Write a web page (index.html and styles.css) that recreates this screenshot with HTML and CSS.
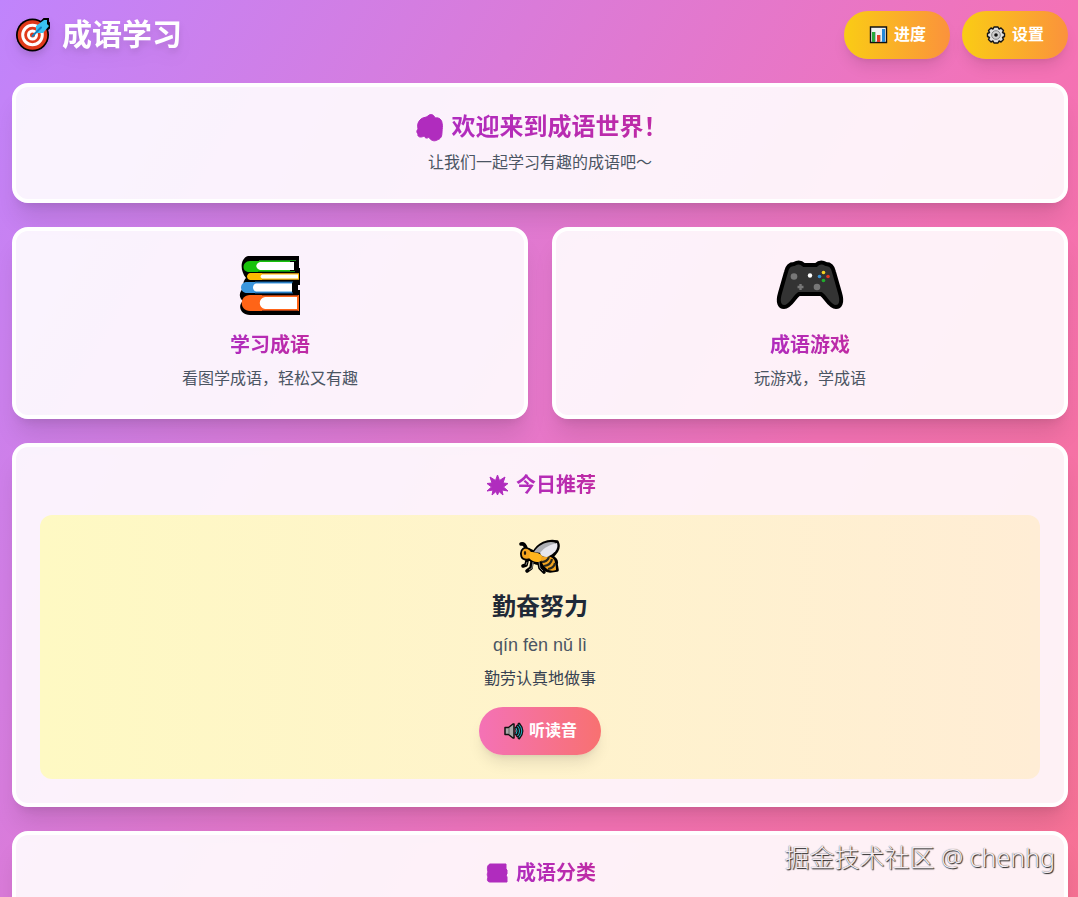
FILE: index.html
```html
<!DOCTYPE html>
<html lang="zh-CN">
<head>
<meta charset="UTF-8">
<meta name="viewport" content="width=device-width, initial-scale=1">
<title>成语学习</title>
<link rel="stylesheet" href="styles.css">
</head>
<body>
<div class="page">
  <header class="header">
    <h1 class="brand">
      <svg class="brand-icon" viewBox="0 0 42 42" aria-hidden="true">
        <circle cx="20.500" cy="21" r="16.500" fill="#000"/>
        <path d="M26 11l6-6h4v3l1 1v5l-6 5z" fill="#000" stroke="#000" stroke-width="2"/>
        <circle cx="20.500" cy="21" r="14.800" fill="#e03a1b"/>
        <circle cx="20.500" cy="21" r="9.800" fill="none" stroke="#fff" stroke-width="3"/>
        <circle cx="20.500" cy="21" r="4" fill="none" stroke="#fff" stroke-width="3"/>
        <path d="M24 12l8-6h3v4l2 2-6 7h-7z" fill="#39c3f2"/>
        <path d="M20.500 22L29 13.500" stroke="#147fc1" stroke-width="2" stroke-linecap="round"/>
      </svg>
      <span>成语学习</span>
    </h1>
    <nav class="actions">
      <button class="btn btn-gold" type="button">
        <svg class="btn-icon" viewBox="0 0 22 22" aria-hidden="true">
          <path d="M2.500 3h16v15.500h-16z" fill="#f2f2f2" stroke="#111" stroke-width="1.400"/>
          <path d="M4 8h3v10H4z" fill="#27a83c"/><path d="M9 11h3v7H9z" fill="#e43a28"/><path d="M14 5h3v13h-3z" fill="#2589d8"/>
          <path d="M7.500 8v9M12.500 11v6" stroke="#bbb"/>
        </svg>
        <span>进度</span>
      </button>
      <button class="btn btn-gold" type="button">
        <svg class="btn-icon" viewBox="0 0 22 22" aria-hidden="true">
          <path d="M8 3h4l1 2 2-1 2.500 2.500-1 2 2 1v3l-2 1 1 2L15 18l-2-1-1 2H8l-1-2-2 1-2.500-2.500 1-2-2-1v-3l2-1-1-2L5 4l2 1z" fill="#dedede" stroke="#151515" stroke-width="1.400" stroke-linejoin="round"/>
          <circle cx="10" cy="11" r="4.300" fill="#d0d0d0" stroke="#888"/><circle cx="10" cy="11" r="1.800" fill="#111"/>
        </svg>
        <span>设置</span>
      </button>
    </nav>
  </header>

  <main class="content">
    <section class="card">
      <h2 class="title title-large">
        <svg class="title-icon" viewBox="0 0 33 32" aria-hidden="true">
          <path d="M7 9c2-3 6-2 8-4 3-3 6-1 7 2 4-1 7 2 7 5 1 3 0 6 0 9 0 4-1 7-5 8-3 2-7 0-8-3-2 2-4 1-5-1-3 2-7 1-6-2-2-2-1-4 0-5-1-4 0-7 2-9z"/>
        </svg>
        <span class="gradient-text">欢迎来到成语世界！</span>
      </h2>
      <p class="text">让我们一起学习有趣的成语吧～</p>
    </section>

    <div class="features">
      <section class="card">
        <svg class="feature-icon" viewBox="0 0 80 60" aria-hidden="true">
          <path d="M18 1h51v12h1v17h-2v5h2v25H20C11 60 7 51 13 46 8 42 9 36 15 32c-3-3-1-7 1-9C9 14 11 3 18 1z" fill="#000"/>
          <path d="M20 6h40v11H19c-8 0-7-11 1-11z" fill="#18c20b"/>
          <path d="M30 7h34v8H30c-5-2-5-6 0-8z" fill="#fff"/>
          <path d="M29 5.500h37M28 16.500h37" stroke="#118413"/>
          <path d="M20 18h49v7H20c-4-1-4-6 0-7z" fill="#ffb900"/>
          <path d="M32 19.500h36v4H32c-2-1-2-3 0-4z" fill="#fff"/><path d="M32 18.500h37M32 24.500h37" stroke="#c58a13"/>
          <path d="M17 27h45v11H17c-8 0-8-11 0-11z" fill="#3b96dd"/>
          <path d="M26 28.500h36v8H26c-4-1-4-7 0-8z" fill="#fff"/><path d="M25 27h38M25 38h38" stroke="#1760a3"/>
          <path d="M20 40h49v16H20c-11 0-11-16 0-16z" fill="#ff6417"/>
          <path d="M35 42h32v12H35c-7-1-7-11 0-12z" fill="#fff"/><path d="M32 40.500h36M32 55.500h36" stroke="#a63d16"/>
        </svg>
        <h3 class="title"><span class="gradient-text">学习成语</span></h3>
        <p class="text">看图学成语，轻松又有趣</p>
      </section>
      <section class="card">
        <svg class="feature-icon" viewBox="0 0 80 60" aria-hidden="true">
          <path d="M24 9c5-3 8-1 10 1h12c2-2 5-4 10-1 5 0 7 3 8 8l6 21c3 10 0 14-4 14-7 0-10-10-15-13H29c-5 3-8 13-15 13-4 0-7-4-4-14l6-21c1-5 3-8 8-8z" fill="#333" stroke="#000" stroke-width="4" stroke-linejoin="round"/>
          <circle cx="24" cy="21.500" r="3.300" fill="#777"/><circle cx="47" cy="32" r="3.300" fill="#777"/>
          <path d="M30.500 29v6M27.500 32h6" stroke="#777" stroke-width="2.400"/>
          <circle cx="40" cy="20.500" r="2.200" fill="#fff"/><circle cx="53.500" cy="17.500" r="1.800" fill="#f6d323"/>
          <circle cx="49.500" cy="21.500" r="1.800" fill="#3a91d3"/><circle cx="58" cy="21.500" r="1.800" fill="#e23724"/><circle cx="53.500" cy="25.500" r="1.800" fill="#20ad2c"/>
        </svg>
        <h3 class="title"><span class="gradient-text">成语游戏</span></h3>
        <p class="text">玩游戏，学成语</p>
      </section>
    </div>

    <section class="card">
      <h3 class="title title-spaced">
        <svg class="title-icon title-icon-small" viewBox="0 0 27 28" aria-hidden="true">
          <path d="M13.500 4l2 5.500L21 6l-2 6 5 .5-4.500 3.500 4.500 4-6-1 1 5-4-3.500-1.500 3.500-1.500-3.500-4 3.500 1-5-6 1 4.500-4L3 12.500l5-.5-2-6 5.500 3.500z" stroke-width="1"/>
        </svg>
        <span class="gradient-text">今日推荐</span>
      </h3>
      <article class="daily">
        <svg class="bee" viewBox="0 0 50 40" aria-hidden="true">
          <g fill="#000" stroke="#000" stroke-width="3.600" stroke-linecap="round" stroke-linejoin="round">
            <path d="M11 10Q10 4 6 5M12 22l-1 4-3 1M17 23l-1 6-4 3M24 24l1 5 4 4" fill="none"/>
            <path d="M7 16c-1-5 3-8 7-5 3 1 4 2 5 3C23 5 33 1 42 3c3 6-1 11-6 15 4 1 6 4 5 7l1 6-7 1c-4 0-8-4-9-8-4 1-8-1-11-4-4 1-8-1-8-4z"/>
          </g>
          <path d="M7 16c-1-5 3-8 7-5 3 2 3 6 1 8-4 2-8 0-8-3z" fill="#f5a51f"/>
          <path d="M15 13c5 0 11 1 13 5 0 6-9 7-14 1z" fill="#ffb51c"/>
          <path d="M26 18c7-2 14 0 14 6 1 3 1 5 1 7-3 1-6 1-9-1-4-3-6-7-6-12z" fill="#f3a51f"/>
          <path d="M27 23q5 0 7-5M29 27q7-1 8-7M33 30q6-1 7-6" fill="none" stroke="#29291f" stroke-width="2.200"/>
          <path d="M19 13C24 5 34 1 41 4c-5 4-11 5-15 10z" fill="#aeb0b5"/>
          <path d="M25 14C29 8 37 5 42 4c2 6-3 11-10 14-3 0-6-1-7-4z" fill="#e7e7ee"/>
          <ellipse cx="10" cy="14" rx="1.200" ry="2" fill="#21170b"/>
          <path d="M12 23l-1 3M18 23l-1 6-3 2M24 23l1 6 3 3" fill="none" stroke="#88867f" stroke-width="1"/>
        </svg>
        <h4 class="idiom">勤奋努力</h4>
        <p class="pinyin">qín fèn nǔ lì</p>
        <p class="meaning">勤劳认真地做事</p>
        <button class="btn btn-pink" type="button">
          <svg class="btn-icon" viewBox="0 0 22 22" aria-hidden="true">
            <path d="M2 7.500h3.500L10 4h1v14h-1l-4.500-3.500H2z" fill="#aaa" stroke="#111" stroke-width="1.500" stroke-linejoin="round"/>
            <path d="M6 8v6" stroke="#666"/>
            <path d="M13 8q2 3 0 6M14.500 6q4 5 0 10M16 4q6 7 0 14" fill="none" stroke="#111" stroke-width="2.800" stroke-linecap="round"/>
            <path d="M13 8q2 3 0 6M14.500 6q4 5 0 10M16 4.500q5.500 6.500 0 13" fill="none" stroke="#24b5ca" stroke-width="1"/>
          </svg>
          <span>听读音</span>
        </button>
      </article>
    </section>

    <section class="card categories">
      <h3 class="title title-spaced">
        <svg class="title-icon title-icon-small" viewBox="0 0 27 28" aria-hidden="true">
          <path d="M6 5h16v5l1 1v4l-1 1 1 2v5H6c-3 0-3-3-2-5-1-2-1-3 0-5-1-3-1-7 2-8z" stroke-width="1"/>
        </svg>
        <span class="gradient-text">成语分类</span>
      </h3>
    </section>
  </main>
</div>
<p class="watermark">掘金技术社区 @ chenhg</p>
</body>
</html>
```
FILE: styles.css
```css
* {
  box-sizing: border-box;
}

body,
h1,
h2,
h3,
h4,
p {
  margin: 0;
}

body {
  height: 100vh;
  overflow: hidden;
  font-family: "Liberation Sans", "Noto Sans CJK SC", sans-serif;
  font-size: 16px;
  line-height: 24px;
  color: #1f2937;
}

.page {
  min-height: 200vh;
  padding: 11px 10px 24px 12px;
  background: linear-gradient(to bottom right, #c084fc, #f472b6, #f87171);
}

.header {
  display: flex;
  align-items: center;
  justify-content: space-between;
  margin-bottom: 24px;
}

.brand {
  display: flex;
  align-items: center;
  gap: 8px;
  color: #fff;
  font-size: 30px;
  line-height: 36px;
  filter: drop-shadow(0 10px 8px rgba(0, 0, 0, 0.04)) drop-shadow(0 4px 3px rgba(0, 0, 0, 0.1));
}

.brand-icon {
  width: 42px;
  height: 42px;
}

.actions {
  display: flex;
  gap: 12px;
}

.btn {
  display: inline-flex;
  align-items: center;
  gap: 4px;
  padding: 12px 24px;
  border: 0;
  border-radius: 24px;
  color: #fff;
  font: inherit;
  font-weight: 700;
  cursor: pointer;
  box-shadow: 0 10px 15px -3px rgba(0, 0, 0, 0.1), 0 4px 6px -4px rgba(0, 0, 0, 0.1);
}

.btn-gold {
  background: linear-gradient(to right, #facc15, #fb923c);
}

.btn-pink {
  background: linear-gradient(to right, #f472b6, #f87171);
}

.btn-icon {
  width: 22px;
  height: 22px;
}

.content {
  display: grid;
  gap: 24px;
}

.card {
  padding: 24px;
  border: 4px solid #fff;
  border-radius: 16px;
  background: rgba(255, 255, 255, 0.9);
  text-align: center;
  box-shadow: 0 20px 25px -5px rgba(0, 0, 0, 0.1), 0 8px 10px -6px rgba(0, 0, 0, 0.1);
}

.title {
  display: flex;
  justify-content: center;
  gap: 5px;
  margin-bottom: 8px;
  font-size: 20px;
  line-height: 28px;
}

.title-large {
  gap: 6px;
  font-size: 24px;
  line-height: 32px;
}

.title-spaced {
  margin-bottom: 16px;
}

.title-icon {
  width: 33px;
  height: 32px;
  fill: #b02cbe;
  stroke: #b02cbe;
}

.title-icon-small {
  width: 27px;
  height: 28px;
}

.gradient-text {
  background: linear-gradient(to right, #b02cbe, #bf2ba4);
  background-clip: text;
  color: transparent;
}

.text {
  color: #4b5563;
}

.features {
  display: grid;
  grid-template-columns: 1fr 1fr;
  gap: 24px;
}

.feature-icon {
  display: block;
  width: 80px;
  height: 60px;
  margin: 0 auto 16px;
}

.daily {
  padding: 24px;
  border-radius: 12px;
  background: linear-gradient(to right, #fef9c3, #ffedd5);
}

.bee {
  display: block;
  width: 50px;
  height: 40px;
  margin: 0 auto 12px;
}

.idiom {
  margin-bottom: 8px;
  font-size: 24px;
  line-height: 32px;
}

.pinyin {
  margin-bottom: 8px;
  color: #4b5563;
  font-size: 18px;
  line-height: 28px;
}

.meaning {
  margin-bottom: 16px;
  color: #374151;
}

.daily .btn {
  display: flex;
  width: max-content;
  margin: 0 auto;
}

.categories {
  min-height: 320px;
}

.watermark {
  position: absolute;
  right: 23px;
  bottom: 22px;
  color: #f5edf1;
  font-family: "Noto Sans", "Noto Sans CJK SC", sans-serif;
  font-size: 25px;
  font-weight: 300;
  line-height: 36px;
  text-shadow: 1px 1px 1px #222, 0 0 1px #555;
}
```
